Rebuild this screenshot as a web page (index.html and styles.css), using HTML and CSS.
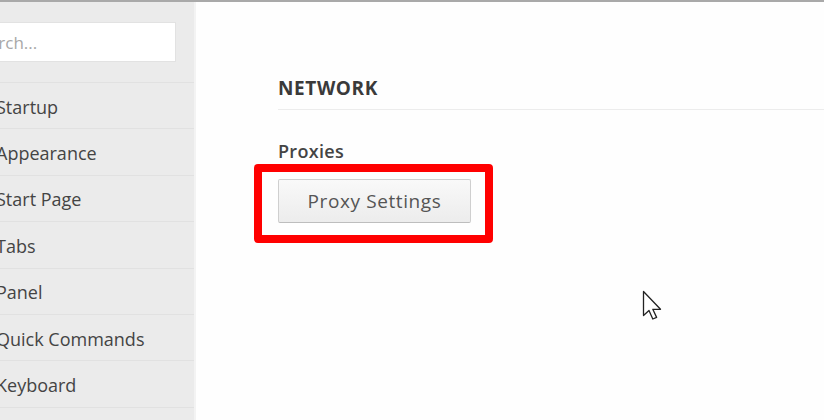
FILE: index.html
```html
<!DOCTYPE html>
<html>
<head>
<meta charset="utf-8">
<link rel="stylesheet" href="styles.css">
</head>
<body>
<div class="window">
  <aside class="sidebar">
    <div class="search"><span class="placeholder">Search...</span></div>
    <ul class="nav">
      <li>Startup</li>
      <li>Appearance</li>
      <li>Start Page</li>
      <li>Tabs</li>
      <li>Panel</li>
      <li>Quick Commands</li>
      <li>Keyboard</li>
      <li></li>
    </ul>
  </aside>
  <main class="content">
    <h2 class="section-title">NETWORK</h2>
    <h3 class="group-title">Proxies</h3>
    <div class="btn-row">
      <button class="btn">Proxy Settings</button>
      <div class="highlight"></div>
    </div>
    <svg class="cursor" width="24" height="34" viewBox="0 0 24 34">
      <path d="M1.5 1.5 L1.5 25.5 L7 20.5 L10.8 29 L14.6 27.4 L10.8 19.3 L18.5 19.3 Z" fill="#fff" stroke="#222" stroke-width="1.3" stroke-linejoin="round"/>
    </svg>
  </main>
</div>
</body>
</html>
```
FILE: styles.css
```css
* { box-sizing: border-box; }
html, body { margin: 0; padding: 0; }
body {
  width: 824px;
  height: 420px;
  overflow: hidden;
  font-family: "Open Sans", "Noto Sans", sans-serif;
  background: #fefefe;
  color: #333;
}
.window {
  display: flex;
  height: 420px;
  border-top: 2px solid #a9a9a9;
}
.sidebar {
  width: 196px;
  flex: none;
  background: #ebebeb;
  border-right: 2px solid #f3f3f3;
  padding-top: 20px;
  overflow: hidden;
}
.search {
  margin-left: -40px;
  width: 216px;
  height: 40px;
  background: #fff;
  border: 1px solid #e2e2e2;
  display: flex;
  align-items: center;
  padding-left: 9px;
  white-space: nowrap;
}
.placeholder {
  color: #a8a8a8;
  font-size: 17px;
}
.nav {
  list-style: none;
  margin: 20px 0 0 0;
  padding: 0;
  border-top: 1px solid #e1e1e1;
}
.nav li {
  height: 46.4px;
  border-bottom: 1px solid #e1e1e1;
  display: flex;
  align-items: center;
  margin-left: -4px;
  padding-top: 2px;
  font-size: 18px;
  color: #444;
  white-space: nowrap;
}
.content {
  flex: 1;
  position: relative;
  padding-left: 82px;
  padding-top: 74px;
}
.section-title {
  margin: 0;
  font-size: 19px;
  font-weight: 700;
  color: #3a3a3a;
  letter-spacing: 0.6px;
  line-height: 24px;
  padding-bottom: 9px;
  border-bottom: 1px solid #ececec;
}
.group-title {
  margin: 30px 0 0 0;
  font-size: 18px;
  font-weight: 600;
  color: #444;
  letter-spacing: 0.3px;
  line-height: 22px;
}
.btn-row {
  position: relative;
  margin-top: 17px;
}
.btn {
  width: 193px;
  height: 44px;
  font-family: inherit;
  font-size: 19px;
  letter-spacing: 0.6px;
  color: #555;
  background: linear-gradient(#f9f9f9, #ececec);
  border: 1px solid #cfcfcf;
  border-bottom-color: #bdbdbd;
  border-radius: 2px;
  padding: 0;
}
.highlight {
  position: absolute;
  left: -24px;
  top: -15px;
  width: 239px;
  height: 79px;
  border: 8px solid #ff0000;
  border-radius: 4px;
}
.cursor {
  position: absolute;
  left: 446px;
  top: 288px;
}
```
